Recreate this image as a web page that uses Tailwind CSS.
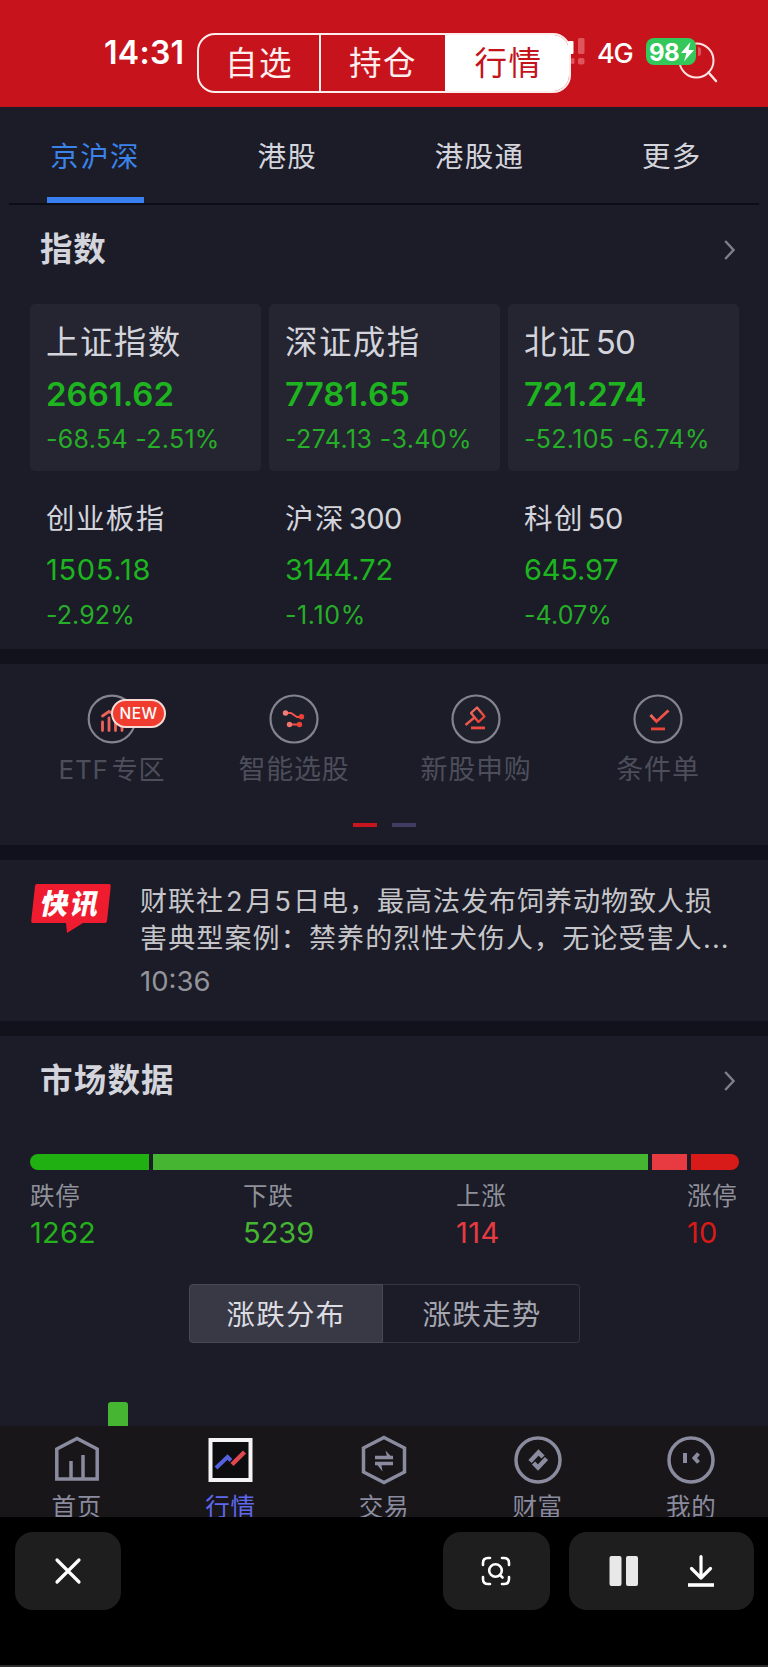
<!DOCTYPE html>
<html lang="zh-CN">
<head>
    <meta charset="UTF-8">
    <meta name="viewport" content="width=device-width, initial-scale=1.0">
    <title>行情</title>
    <script src="https://cdn.jsdelivr.net/npm/@tailwindcss/browser@4"></script>
</head>
<body class="bg-black w-[768px] h-[1667px] overflow-hidden font-['Inter','Noto_Sans_CJK_SC',sans-serif] text-[#d3d4dc] whitespace-nowrap">
    <div class="flex flex-col h-[1667px]">
        <!-- Header -->
        <header class="relative h-[107px] shrink-0 bg-[#c7141c] pt-[33px] pl-[197px]">
            <div class="flex w-[374px] h-[60px] rounded-[18px] border-2 border-[#ffecec] overflow-hidden text-[32.5px] leading-[58px] tracking-[1.5px] text-[#ffeeee] text-center">
                <div class="w-[120px]">自选</div>
                <div class="w-[126px] border-l-2 border-[#ffecec]">持仓</div>
                <div class="flex-1 bg-white pl-[3px] text-[#c3141c]">行情</div>
            </div>
            <!-- Status bar over the header -->
            <div class="absolute left-[104px] top-[33px] text-[32px] leading-[40px] font-semibold text-white tracking-[0.3px]">14:31</div>
            <svg class="absolute left-[568px] top-[34px]" width="20" height="34" viewBox="0 0 20 34">
                <rect x="0" y="7" width="5.5" height="13" rx="1" fill="#fff"/>
                <rect x="10" y="4" width="6.5" height="16" rx="1.5" fill="#e0545b"/>
                <rect x="3" y="24" width="3.5" height="6" rx="1.5" fill="#e0545b"/>
                <rect x="10" y="24" width="6.5" height="6.5" rx="2" fill="#e0545b"/>
            </svg>
            <div class="absolute left-[597px] top-[34px] text-[27px] leading-[40px] font-medium text-white tracking-[-1.2px]">4G</div>
            <svg class="absolute left-[676px] top-[38px]" width="46" height="48" viewBox="0 0 46 48" fill="none" stroke="#ffe3e3" stroke-width="2">
                <circle cx="20.5" cy="22.5" r="17"/>
                <path d="M32.500 34.5 40 43" stroke-linecap="round" stroke-width="2.5"/>
            </svg>
            <div class="absolute left-[646px] top-[38px] w-[50px] h-[27px] rounded-[8px] bg-[#34c759]">
                <div class="absolute left-[3px] top-[1px] text-[24px] leading-[27px] font-bold text-white tracking-[-0.5px]">98</div>
                <svg class="absolute left-[34px] top-[3px]" width="15" height="21" viewBox="0 0 15 21" fill="#fff"><path d="M10.5 1 1 12h5.5L4 20.5 14 9H8.500z"/></svg>
            </div>
            <div class="absolute left-[698px] top-[47px] w-[3px] h-[9px] rounded-r-full bg-[#e0545b]"></div>
        </header>

        <!-- Market tabs and indices -->
        <section class="h-[542px] shrink-0 bg-[#1b1c27]">
            <nav class="relative grid grid-cols-4 h-[96px] -ml-px text-center text-[28.5px] leading-[99px] tracking-[1.4px]">
                <div class="text-[#3b82ea]">京沪深</div>
                <div>港股</div>
                <div>港股通</div>
                <div>更多</div>
                <div class="absolute left-[48px] top-[90px] w-[97px] h-[6px] bg-[#3a7ff0]"></div>
            </nav>
            <div class="mx-[9px] h-[2px] bg-[#0b0c17]"></div>
            <div class="flex items-center justify-between h-[90px] mb-[9px] pl-[40px] pr-[33px]">
                <h2 class="text-[32.5px] font-semibold tracking-[0.8px]">指数</h2>
                <svg width="11" height="20" viewBox="0 0 11 20" fill="none" stroke="#7d7e8b" stroke-width="2.400"><path d="M1.200 1 9.500 10 1.200 19"/></svg>
            </div>
            <div class="grid grid-cols-3 gap-x-[8px] pl-[30px] pr-[29px]">
                <div class="h-[167px] rounded-[5px] bg-[#242530] pt-[18px] pl-[16px]">
                    <div class="text-[32.5px] leading-[41px] -mb-px tracking-[1.4px]">上证指数</div>
                    <div class="text-[33px] leading-[64px] font-semibold text-[#1db420]">2661.62</div>
                    <div class="text-[25px] leading-[26px] tracking-[0.3px] text-[#27ae29]">-68.54 -2.51%</div>
                </div>
                <div class="h-[167px] rounded-[5px] bg-[#242530] pt-[18px] pl-[16px]">
                    <div class="text-[32.5px] leading-[41px] -mb-px tracking-[1.4px]">深证成指</div>
                    <div class="text-[33px] leading-[64px] font-semibold text-[#1db420]">7781.65</div>
                    <div class="text-[25px] leading-[26px] tracking-[0.4px] text-[#27ae29]">-274.13 -3.40%</div>
                </div>
                <div class="h-[167px] rounded-[5px] bg-[#242530] pt-[18px] pl-[16px]">
                    <div class="flex items-center text-[32.5px] leading-[41px] -mb-px tracking-[1.4px]">北证<span class="ml-[4px] text-[33px] tracking-[-0.8px]">50</span></div>
                    <div class="text-[33px] leading-[64px] font-semibold tracking-[-0.2px] text-[#1db420]">721.274</div>
                    <div class="text-[25px] leading-[26px] tracking-[0.3px] text-[#27ae29]">-52.105 -6.74%</div>
                </div>
                <div class="pt-[30px] pl-[16px]">
                    <div class="text-[28.5px] leading-[35px] -mb-px tracking-[1.4px]">创业板指</div>
                    <div class="text-[29px] leading-[69px] -mb-px tracking-[0.7px] text-[#1db420]">1505.18</div>
                    <div class="text-[25px] leading-[24px] tracking-[0.1px] text-[#27ae29]">-2.92%</div>
                </div>
                <div class="pt-[30px] pl-[16px]">
                    <div class="flex items-center text-[28.5px] leading-[35px] -mb-px tracking-[1.4px]">沪深<span class="ml-[4px] text-[29px] tracking-[-0.5px]">300</span></div>
                    <div class="text-[29px] leading-[69px] -mb-px text-[#1db420]">3144.72</div>
                    <div class="text-[25px] leading-[24px] tracking-[0.6px] text-[#27ae29]">-1.10%</div>
                </div>
                <div class="pt-[30px] pl-[16px]">
                    <div class="flex items-center text-[28.5px] leading-[35px] -mb-px tracking-[1.4px]">科创<span class="ml-[4px] text-[29px] tracking-[-0.5px]">50</span></div>
                    <div class="text-[29px] leading-[69px] -mb-px tracking-[-0.2px] text-[#1db420]">645.97</div>
                    <div class="text-[25px] leading-[24px] tracking-[0.1px] text-[#27ae29]">-4.07%</div>
                </div>
            </div>
        </section>

        <!-- Shortcuts -->
        <section class="h-[181px] shrink-0 bg-[#1b1c27] border-t-[15px] border-[#11121c] box-content">
            <svg class="absolute" width="0" height="0">
                <linearGradient id="red" x1="0" y1="0" x2="1" y2="1"><stop offset="0" stop-color="#f57d78"/><stop offset="1" stop-color="#ea3023"/></linearGradient>
            </svg>
            <div class="grid grid-cols-4 pl-[21px] pr-[19px] pt-[30px] text-[27px] leading-[42px] tracking-[0.8px] text-[#4d4e5b]">
                <div class="relative flex flex-col items-center">
                    <svg class="mb-[5px]" width="50" height="50" viewBox="0 0 50 50" fill="none" stroke="#ee6259" stroke-width="2.800" stroke-linecap="round">
                        <circle cx="25" cy="25" r="23.300" stroke="#82838e" stroke-width="2.200"/>
                        <path d="M15.500 28V36.500M22 24V36.500M28.500 27V36.500M35 30V36.500M15.500 22 22 17.500 28 21"/>
                    </svg>
                    <div class="absolute left-[90px] top-[5px] w-[55px] h-[29px] rounded-full border-2 border-[#f7d9d5] bg-[#f03c2e] text-white text-[15.500px] leading-[25px] font-medium tracking-[0.5px] text-center">NEW</div>
                    <div class="text-[26px]">ETF<span class="ml-[3px]">专区</span></div>
                </div>
                <div class="flex flex-col items-center">
                    <svg class="mb-[5px]" width="50" height="50" viewBox="0 0 50 50" fill="none" stroke="#ee5248" stroke-width="2">
                        <circle cx="25" cy="25" r="23.500" fill="#1e212c" stroke="#82838e" stroke-width="2.200"/>
                        <path d="M17 19H22L28 23H33M20 30.500H30"/>
                        <g stroke="none"><circle cx="16.500" cy="19" r="2.700" fill="#f57d78"/><circle cx="32.500" cy="22.700" r="2.700" fill="#ee4033"/><circle cx="20.500" cy="30.500" r="2.700" fill="#f4736c"/><circle cx="30.500" cy="30.500" r="2.700" fill="#ee4033"/></g>
                    </svg>
                    <div>智能选股</div>
                </div>
                <div class="flex flex-col items-center">
                    <svg class="mb-[5px]" width="50" height="50" viewBox="0 0 50 50" fill="none" stroke="url(#red)" stroke-width="2.300" stroke-linejoin="round">
                        <circle cx="25" cy="25" r="23.500" fill="#1e212c" stroke="#82838e" stroke-width="2.200"/>
                        <path d="M26 13.500 33.500 22.500 27.500 28 20 19ZM23.500 23.500 14.500 31"/>
                        <rect x="20" y="32.500" width="14" height="2.800" fill="#ee4b40" stroke="none"/>
                    </svg>
                    <div>新股申购</div>
                </div>
                <div class="flex flex-col items-center">
                    <svg class="mb-[5px]" width="50" height="50" viewBox="0 0 50 50" fill="none" stroke="url(#red)" stroke-width="2.800">
                        <circle cx="25" cy="25" r="23.500" fill="#1e212c" stroke="#82838e" stroke-width="2.200"/>
                        <path d="M17.500 21 23.500 27.500 35.500 16.500"/>
                        <rect x="18" y="33.500" width="14" height="2.800" fill="#ea4339" stroke="none"/>
                    </svg>
                    <div>条件单</div>
                </div>
            </div>
            <div class="flex justify-center gap-[15px] mt-[32px]">
                <div class="w-[24px] h-[4px] bg-[#c9161e]"></div>
                <div class="w-[24px] h-[4px] bg-[#413c62]"></div>
            </div>
        </section>

        <!-- News flash -->
        <section class="flex h-[161px] shrink-0 bg-[#1b1c27] border-t-[15px] border-[#10111d] box-content">
            <div class="relative w-[140px] shrink-0">
                <svg class="absolute left-[30px] top-[24px]" width="82" height="50" viewBox="0 0 82 50"><path d="M7 0H79Q81 0 80.700 3L77 37Q76.700 39 75 39H53L37 49 36 39H3Q1 39 1.200 37L5 2Q5.200 0 7 0Z" fill="#ee1c2e"/></svg>
                <div class="absolute left-[41px] top-[25px] text-[28px] leading-[39px] font-black tracking-[2px] text-white -skew-x-12">快讯</div>
            </div>
            <div class="pt-[23px] text-[27px] leading-[37px] tracking-[1.150px] text-[#c6c6ca]">
                <div class="tracking-[1px]">财联社<span class="mx-[2px]">2</span>月<span class="mx-px">5</span>日电，最高法发布饲养动物致人损</div>
                <div>害典型案例：禁养的烈性犬伤人，无论受害人...</div>
                <div class="mt-[4px] text-[27.5px] leading-[40px] tracking-[0px] text-[#94949b]">10:36</div>
            </div>
        </section>

        <!-- Market data -->
        <section class="h-[390px] shrink-0 bg-[#1b1c27] border-t-[15px] border-[#12121c] box-content">
            <div class="flex items-center justify-between h-[90px] pl-[40px] pr-[33px]">
                <h2 class="text-[32.5px] font-semibold tracking-[1.200px]">市场数据</h2>
                <svg width="11" height="20" viewBox="0 0 11 20" fill="none" stroke="#7d7e8b" stroke-width="2.400"><path d="M1.200 1 9.500 10 1.200 19"/></svg>
            </div>
            <div class="flex gap-[4px] h-[16px] mt-[28px] ml-[30px] w-[709px] rounded-full overflow-hidden">
                <div class="w-[119px] bg-[#21b011]"></div>
                <div class="flex-1 bg-[#45b532]"></div>
                <div class="w-[35px] bg-[#e83b41]"></div>
                <div class="w-[48px] bg-[#d81a18]"></div>
            </div>
            <div class="flex pl-[30px] pt-[8px] text-[24.5px] leading-[36px] tracking-[0.8px] text-[#8f9099]">
                <div class="w-[213px]">跌停<div class="text-[29px] leading-[38px] tracking-[0.2px] text-[#24b11b]">1262</div></div>
                <div class="w-[213px]">下跌<div class="text-[29px] leading-[38px] tracking-normal text-[#45b532]">5239</div></div>
                <div class="w-[231px]">上涨<div class="text-[29px] leading-[38px] tracking-[0.5px] text-[#e83b41]">114</div></div>
                <div>涨停<div class="text-[29px] leading-[38px] tracking-[0.2px] text-[#d81a18]">10</div></div>
            </div>
            <div class="flex ml-[189px] mt-[32px] w-[391px] h-[59px] text-center text-[28.5px] leading-[59px] tracking-[1.3px]">
                <div class="w-[194px] rounded-l-[4px] border border-[#484954] bg-[#383945] text-[#dcdce2]">涨跌分布</div>
                <div class="flex-1 rounded-r-[4px] border border-l-0 border-[#343540] pl-[2px] text-[#a5a6b0]">涨跌走势</div>
            </div>
            <div class="ml-[108px] mt-[59px] w-[20px] h-[24px] rounded-t-[3px] bg-[#45b532]"></div>
        </section>

        <!-- Bottom tab bar, labels cut off by its lower edge -->
        <nav class="grid grid-cols-5 h-[91px] shrink-0 overflow-hidden bg-[#181618] pt-[8px] text-[24.5px] leading-[32px] tracking-[0.7px] text-[#8a8b9f]">
            <div class="flex flex-col items-center">
                <svg class="mb-[5px] shrink-0" width="52" height="52" viewBox="0 0 52 52" fill="none" stroke="#8a8b9f" stroke-width="3.500">
                    <path d="M5.800 15 26 4.500 46.200 15V45H5.800Z"/>
                    <path d="M20 45V27M32 45V21"/>
                </svg>
                <div>首页</div>
            </div>
            <div class="flex flex-col items-center text-[#5f69ee]">
                <svg class="mb-[5px] shrink-0" width="52" height="52" viewBox="0 0 52 52" fill="none" stroke-width="4">
                    <rect x="6.500" y="6" width="40" height="40" fill="#0d0c0e" stroke="#f5f3f4"/>
                    <path d="M12 34 23.500 23 27 26.500" stroke="#5560dd"/>
                    <path d="M28 30.500 40.500 18" stroke="#e0474f" stroke-width="4.500"/>
                </svg>
                <div>行情</div>
            </div>
            <div class="flex flex-col items-center">
                <svg class="mb-[5px] shrink-0" width="52" height="52" viewBox="0 0 52 52" fill="none" stroke="#8a8b9f" stroke-width="3.500">
                    <path d="M26 3.500 46.500 14V38L26 48.500 5.500 38V14Z"/>
                    <path d="M17 23.500H35M17 29.500H35" stroke-width="3.500"/>
                    <path d="M27.500 16.500 35.500 25H29.500ZM24.500 37.500 17 28H23Z" fill="#8a8b9f" stroke="none"/>
                </svg>
                <div>交易</div>
            </div>
            <div class="flex flex-col items-center">
                <svg class="mb-[5px] shrink-0" width="52" height="52" viewBox="0 0 52 52" fill="none" stroke="#8a8b9f" stroke-width="3.500">
                    <circle cx="26" cy="26" r="22"/>
                    <path d="M19.500 28.500 26.500 19 30.500 23M32.500 23.500 26 33 21.500 28.500" stroke="none"/>
                    <path d="M18 27.500 26.500 18.500 31 23M34.500 24.500 26 33.500 21.500 29" stroke-width="4.500"/>
                </svg>
                <div>财富</div>
            </div>
            <div class="flex flex-col items-center">
                <svg class="mb-[5px] shrink-0" width="52" height="52" viewBox="0 0 52 52" fill="none" stroke="#8a8b9f" stroke-width="3.500">
                    <circle cx="26" cy="26" r="22"/>
                    <path d="M20 19V29M33.500 19.500 29.500 24 33.500 28.500" stroke-width="4"/>
                </svg>
                <div>我的</div>
            </div>
        </nav>

        <!-- Viewer controls -->
        <footer class="flex grow bg-black pt-[15px] pl-[15px] border-b-2 border-[#2c2c2c]">
            <button class="flex items-center justify-center w-[106px] h-[78px] pr-px rounded-[18px] bg-[#1e1e1e]">
                <svg width="28" height="28" viewBox="0 0 28 28" fill="none" stroke="#fff" stroke-width="3.200" stroke-linecap="round"><path d="M3 3 25 25M25 3 3 25"/></svg>
            </button>
            <button class="flex items-center justify-center w-[107px] h-[78px] ml-[322px] pr-[2px] rounded-[18px] bg-[#1e1e1e]">
                <svg width="30" height="30" viewBox="0 0 30 30" fill="none" stroke="#fff" stroke-width="2.600" stroke-linecap="round">
                    <path d="M2 9V7Q2 2 7 2H9M21 2H23Q28 2 28 7V9M28 21V23Q28 28 23 28H21M9 28H7Q2 28 2 23V21"/>
                    <circle cx="14.500" cy="14.500" r="6.300"/>
                    <path d="M19 19 21.500 21.500"/>
                </svg>
            </button>
            <div class="flex items-center w-[185px] h-[78px] ml-[19px] pl-[40px] rounded-[18px] bg-[#1e1e1e]">
                <svg width="30" height="30" viewBox="0 0 30 30" fill="#e8e8e8"><rect x="0.500" y="0" width="12" height="30" rx="2"/><rect x="17" y="0" width="12" height="30" rx="2"/></svg>
                <svg class="ml-[47px]" width="30" height="34" viewBox="0 0 30 34" fill="none" stroke="#fff" stroke-width="3.200" stroke-linecap="round" stroke-linejoin="round"><path d="M15 2.500V24M5.500 14.500 15 24 24.500 14.500"/><path d="M2 31H28" stroke-width="3.600" stroke-linecap="butt"/></svg>
            </div>
        </footer>
    </div>
</body>
</html>
